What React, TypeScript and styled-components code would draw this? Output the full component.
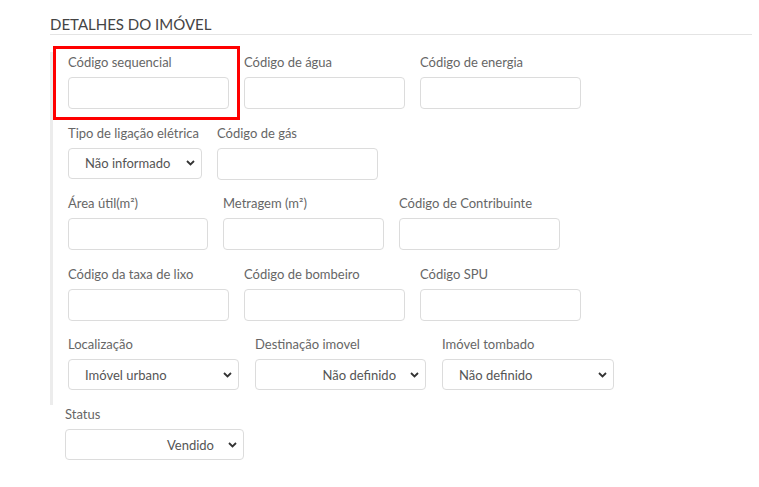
import React from 'react'
import styled, { createGlobalStyle } from 'styled-components'

const GlobalStyle = createGlobalStyle`
  html, body {
    margin: 0;
    padding: 0;
    background: #ffffff;
    font-family: Lato, "Open Sans", Arial, sans-serif;
  }
`

const Page = styled.div`
  padding: 14px 7px 0 50px;
`

const SectionTitle = styled.h3`
  margin: 0;
  padding-top: 1px;
  padding-bottom: 1px;
  font-size: 15px;
  font-weight: 400;
  line-height: 18px;
  color: #444;
  border-bottom: 1px solid #e4e4e4;
`

const Fieldset = styled.div`
  margin-top: 17px;
  padding: 1px 0 1px 15px;
  border-left: 3px solid #ececec;
`

const Row = styled.div<{ $gap?: number }>`
  display: flex;
  gap: ${({ $gap }) => $gap ?? 15}px;
  margin-bottom: 14.5px;

  &:last-child {
    margin-bottom: 14px;
  }
`

const Field = styled.div<{ $width: number }>`
  position: relative;
  display: flex;
  flex-direction: column;
  width: ${({ $width }) => $width}px;
`

const Label = styled.label`
  font-size: 13px;
  line-height: 18px;
  color: #666;
  white-space: nowrap;
  margin-bottom: 6px;
`

const TextInput = styled.input`
  box-sizing: border-box;
  width: 100%;
  height: 32px;
  border: 1px solid #dcdcdc;
  border-radius: 4px;
  background: #fff;
  outline: none;
  font: inherit;
`

const SelectWrap = styled.div`
  position: relative;
  height: 31px;
`

const Select = styled.select<{ $align?: 'left' | 'right' }>`
  box-sizing: border-box;
  width: 100%;
  height: 100%;
  appearance: none;
  -webkit-appearance: none;
  border: 1px solid #dcdcdc;
  border-radius: 4px;
  background: #fff;
  padding: ${({ $align }) => ($align === 'right' ? '0 29px 0 16px' : '0 20px 0 16px')};
  font-family: Lato, "Open Sans", Arial, sans-serif;
  font-size: 13px;
  color: #555;
  text-align: ${({ $align }) => $align ?? 'left'};
  text-align-last: ${({ $align }) => $align ?? 'left'};
  outline: none;
`

const Chevron = styled.svg`
  position: absolute;
  right: 7px;
  top: 50%;
  margin-top: -3px;
  pointer-events: none;
`

const Highlight = styled.div`
  position: absolute;
  top: -7px;
  left: -15px;
  right: -11px;
  bottom: -11px;
  border: 3px solid #ff0000;
  pointer-events: none;
`

const StatusBlock = styled.div`
  padding-left: 15px;
  width: 179px;
  display: flex;
  flex-direction: column;
`

type SelectFieldProps = {
  value: string
  align?: 'left' | 'right'
}

const SelectField: React.FC<SelectFieldProps> = ({ value, align }) => (
  <SelectWrap>
    <Select $align={align} defaultValue={value}>
      <option>{value}</option>
    </Select>
    <Chevron width="9" height="6" viewBox="0 0 9 6">
      <polyline points="1,1 4.5,4.5 8,1" fill="none" stroke="#333" strokeWidth="1.8" />
    </Chevron>
  </SelectWrap>
)

const App: React.FC = () => {
  return (
    <>
      <GlobalStyle />
      <Page>
        <SectionTitle>DETALHES DO IMÓVEL</SectionTitle>
        <Fieldset>
          <Row>
            <Field $width={161}>
              <Highlight />
              <Label>Código sequencial</Label>
              <TextInput />
            </Field>
            <Field $width={161}>
              <Label>Código de água</Label>
              <TextInput />
            </Field>
            <Field $width={161}>
              <Label>Código de energia</Label>
              <TextInput />
            </Field>
          </Row>
          <Row>
            <Field $width={134}>
              <Label>Tipo de ligação elétrica</Label>
              <SelectField value="Não informado" />
            </Field>
            <Field $width={161}>
              <Label>Código de gás</Label>
              <TextInput />
            </Field>
          </Row>
          <Row>
            <Field $width={140}>
              <Label>Área útil(m²)</Label>
              <TextInput />
            </Field>
            <Field $width={161}>
              <Label>Metragem (m²)</Label>
              <TextInput />
            </Field>
            <Field $width={161}>
              <Label>Código de Contribuinte</Label>
              <TextInput />
            </Field>
          </Row>
          <Row>
            <Field $width={161}>
              <Label>Código da taxa de lixo</Label>
              <TextInput />
            </Field>
            <Field $width={161}>
              <Label>Código de bombeiro</Label>
              <TextInput />
            </Field>
            <Field $width={161}>
              <Label>Código SPU</Label>
              <TextInput />
            </Field>
          </Row>
          <Row $gap={16}>
            <Field $width={171}>
              <Label>Localização</Label>
              <SelectField value="Imóvel urbano" />
            </Field>
            <Field $width={171}>
              <Label>Destinação imovel</Label>
              <SelectField value="Não definido" align="right" />
            </Field>
            <Field $width={172}>
              <Label>Imóvel tombado</Label>
              <SelectField value="Não definido" />
            </Field>
          </Row>
        </Fieldset>
        <StatusBlock>
          <Label>Status</Label>
          <SelectField value="Vendido" align="right" />
        </StatusBlock>
      </Page>
    </>
  )
}

export default App
